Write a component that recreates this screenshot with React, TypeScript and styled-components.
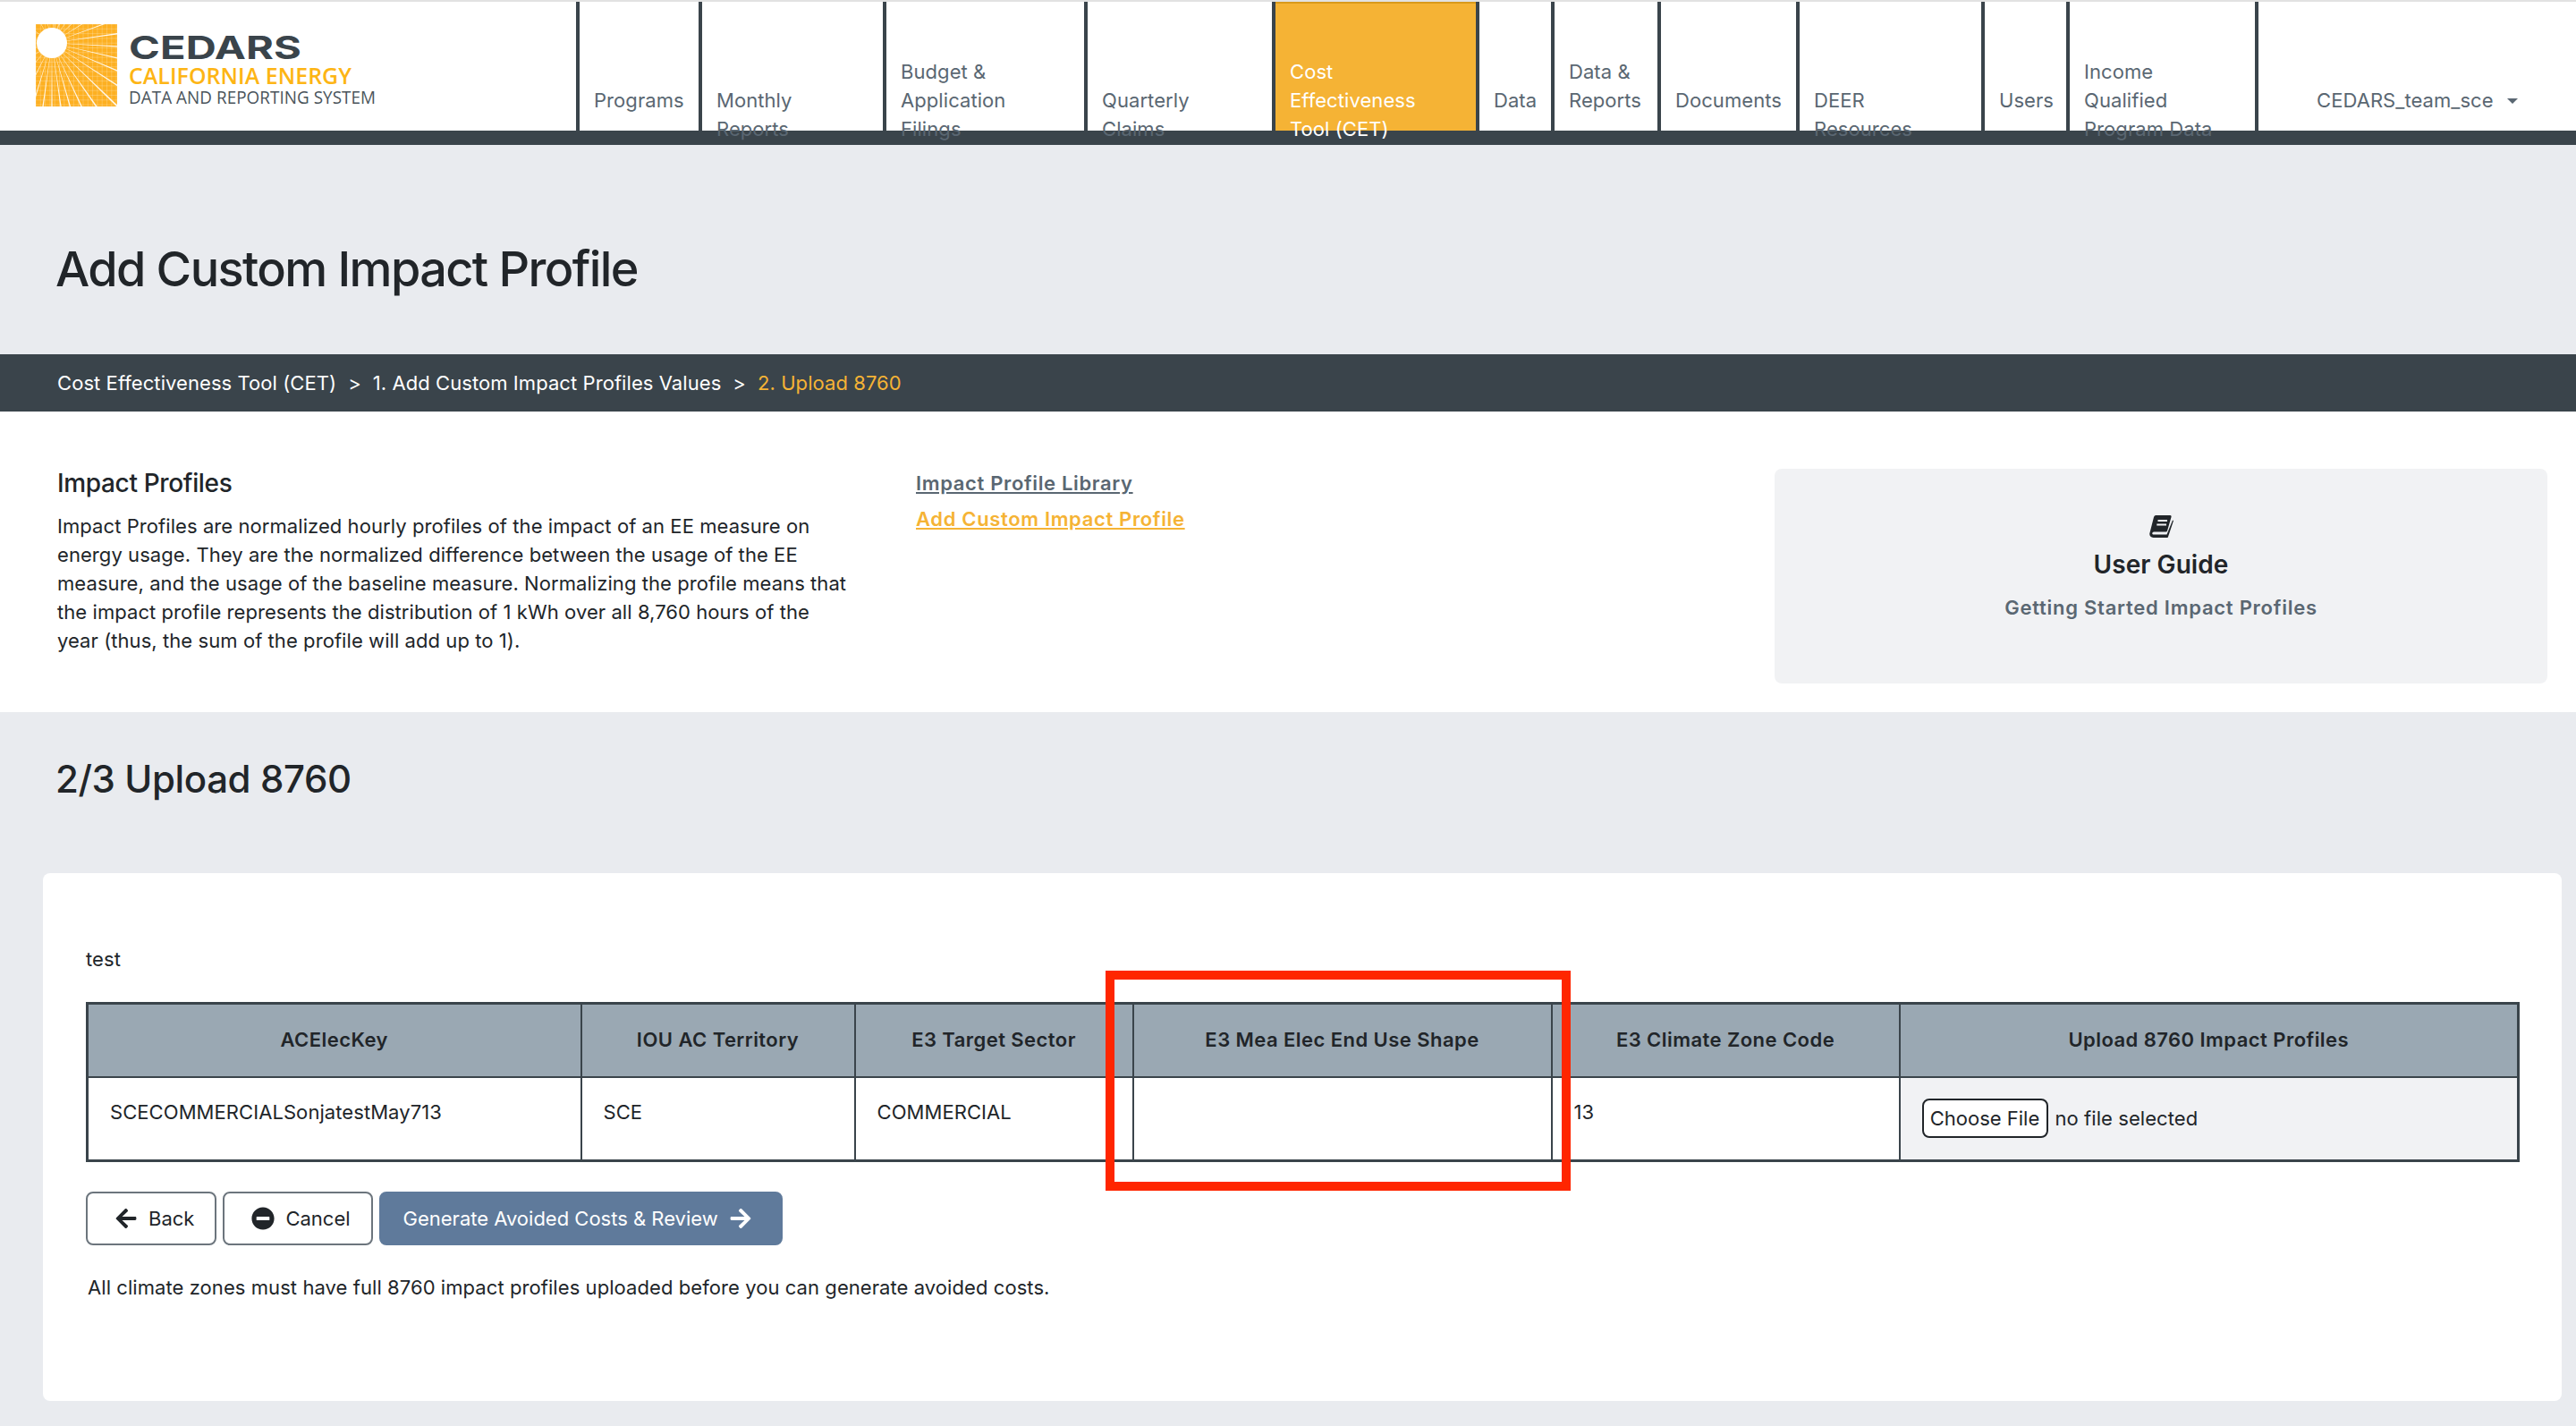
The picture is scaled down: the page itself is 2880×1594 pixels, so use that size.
import React from "react"
import styled, { createGlobalStyle } from "styled-components"
import { FaArrowLeft, FaArrowRight, FaMinusCircle } from "react-icons/fa"

const dark = "#3a444b"
const slate = "#5a6772"
const amber = "#f5b335"

const navItems = [
  { label: "Programs", width: 137, top: 94 },
  { label: "Monthly Reports", width: 206, top: 94, measure: 120 },
  { label: "Budget & Application Filings", width: 225, top: 62, measure: 140 },
  { label: "Quarterly Claims", width: 210, top: 94, measure: 120 },
  { label: "Cost Effectiveness Tool (CET)", width: 228, top: 62, active: true, measure: 170 },
  { label: "Data", width: 84, top: 94 },
  { label: "Data & Reports", width: 119, top: 62, measure: 90 },
  { label: "Documents", width: 155, top: 94 },
  { label: "DEER Resources", width: 207, top: 94, measure: 120 },
  { label: "Users", width: 95, top: 94 },
  { label: "Income Qualified Program Data", width: 211, top: 62, measure: 160 },
]

const columns = [552, 306, 311, 468, 389, 692]
const headings = [
  "ACElecKey",
  "IOU AC Territory",
  "E3 Target Sector",
  "E3 Mea Elec End Use Shape",
  "E3 Climate Zone Code",
  "Upload 8760 Impact Profiles",
]

const rayAngles = [-80, -68, -56, -44, -32, -20, -8, 3, 13, 23, 33, 44, 55, 65, 74, 82, 90, 98, 107, 117, 130, 146, 165, 190, 215, 240, 258, 274, 290]

const LogoDrawing = () => (
  <svg width="400" height="92" viewBox="0 0 400 92">
    <defs>
      <clipPath id="sunSquare">
        <rect width="91" height="92" />
      </clipPath>
    </defs>
    <rect width="91" height="92" fill="#fdb022" />
    <g clipPath="url(#sunSquare)">
      {Array.from({ length: 18 }).map((_, i) => (
        <React.Fragment key={i}>
          <line x1={i * 5.3} y1="0" x2={i * 5.3} y2="92" stroke="#fff" strokeOpacity=".3" strokeWidth=".7" />
          <line x1="0" y1={i * 5.3} x2="91" y2={i * 5.3} stroke="#fff" strokeOpacity=".3" strokeWidth=".7" />
        </React.Fragment>
      ))}
      {rayAngles.map((a) => {
        const r = (a * Math.PI) / 180
        const s = 0.009
        const cx = 18
        const cy = 21
        return (
          <polygon
            key={a}
            fill="#fff"
            fillOpacity=".9"
            points={`${cx},${cy} ${cx + 110 * Math.cos(r - s)},${cy + 110 * Math.sin(r - s)} ${cx + 110 * Math.cos(r + s)},${cy + 110 * Math.sin(r + s)}`}
          />
        )
      })}
      <circle cx="18" cy="21" r="17" fill="#fff" />
    </g>
    <text x="104" y="39" fill={dark} fontFamily="Inter" fontWeight="700" fontSize="36" textLength="193" lengthAdjust="spacingAndGlyphs">
      CEDARS
    </text>
    <text x="104" y="67" fill="#fdb515" fontFamily="Open Sans" fontWeight="600" fontSize="25" textLength="249" lengthAdjust="spacingAndGlyphs">
      CALIFORNIA ENERGY
    </text>
    <text x="104" y="89" fill="#4a545b" fontFamily="Open Sans" fontSize="20" textLength="276" lengthAdjust="spacingAndGlyphs">
      DATA AND REPORTING SYSTEM
    </text>
  </svg>
)

const BookIcon = () => (
  <svg width="27" height="25" viewBox="0 0 27 25" fill="#212529">
    <path d="M7 0H23a1.6 1.6 0 0 1 1.5 2L20 17.5a1.5 1.5 0 0 1-1.4 1H5a2 2 0 0 0-1.8 1.5c0 1 .8 1.5 1.8 1.5H19.5L26 5.5l1 .5L21 24a1 1 0 0 1-1 1H4.5C1.5 25-.3 22.5.4 20L5 2A2.6 2.6 0 0 1 7 0z" />
    <path d="M9.5 6H20M8.3 10.5H19" stroke="#f1f2f4" strokeWidth="2" />
  </svg>
)

export default function App() {
  return (
    <>
      <GlobalStyle />
      <Header>
        <LogoCell>
          <LogoDrawing />
        </LogoCell>
        {navItems.map((item) => (
          <NavItem key={item.label} $width={item.width} $top={item.top} $active={item.active}>
            <NavLabel $measure={item.measure}>{item.label}</NavLabel>
          </NavItem>
        ))}
        <UserItem>
          <span>CEDARS_team_sce</span>
          <Caret />
        </UserItem>
      </Header>

      <PageTitle>Add Custom Impact Profile</PageTitle>

      <Breadcrumb>
        <span>Cost Effectiveness Tool (CET)</span>
        <Crumb>&gt;</Crumb>
        <span>1. Add Custom Impact Profiles Values</span>
        <Crumb>&gt;</Crumb>
        <CurrentCrumb>2. Upload 8760</CurrentCrumb>
      </Breadcrumb>

      <InfoSection>
        <div>
          <InfoHeading>Impact Profiles</InfoHeading>
          <InfoText>
            Impact Profiles are normalized hourly profiles of the impact of an EE measure on energy usage. They are the
            normalized difference between the usage of the EE measure, and the usage of the baseline measure.
            Normalizing the profile means that the impact profile represents the distribution of 1 kWh over all 8,760
            hours of the year (thus, the sum of the profile will add up to 1).
          </InfoText>
        </div>
        <LinkColumn>
          <SideLink href="#">Impact Profile Library</SideLink>
          <SideLink href="#" $active>
            Add Custom Impact Profile
          </SideLink>
        </LinkColumn>
        <GuideCard>
          <BookIcon />
          <GuideTitle>User Guide</GuideTitle>
          <GuideLink>Getting Started Impact Profiles</GuideLink>
        </GuideCard>
      </InfoSection>

      <StepTitle>2/3 Upload 8760</StepTitle>

      <Card>
        <CardNote>test</CardNote>
        <TableWrap>
          <Table>
            <colgroup>
              {columns.map((w, i) => (
                <col key={i} width={w} />
              ))}
            </colgroup>
            <thead>
              <tr>
                {headings.map((h) => (
                  <Th key={h}>{h}</Th>
                ))}
              </tr>
            </thead>
            <tbody>
              <tr>
                <Td>SCECOMMERCIALSonjatestMay713</Td>
                <Td>SCE</Td>
                <Td>COMMERCIAL</Td>
                <Td />
                <Td>13</Td>
                <UploadCell>
                  <UploadRow>
                    <ChooseFile type="button">Choose File</ChooseFile>
                    <span>no file selected</span>
                  </UploadRow>
                </UploadCell>
              </tr>
            </tbody>
          </Table>
          <Highlight />
        </TableWrap>
        <Actions>
          <OutlineButton type="button">
            <FaArrowLeft size={26} />
            Back
          </OutlineButton>
          <OutlineButton type="button">
            <FaMinusCircle size={26} />
            Cancel
          </OutlineButton>
          <PrimaryButton type="button">
            Generate Avoided Costs &amp; Review
            <FaArrowRight size={26} />
          </PrimaryButton>
        </Actions>
        <Footnote>All climate zones must have full 8760 impact profiles uploaded before you can generate avoided costs.</Footnote>
      </Card>
    </>
  )
}

const GlobalStyle = createGlobalStyle`
  html, body {
    margin: 0;
    background: #e9ebef;
    color: #212529;
    font-family: "Inter", "Liberation Sans", sans-serif;
    font-size: 22px;
    line-height: 32px;
    letter-spacing: .07px;
  }
  * {
    box-sizing: border-box;
  }
`

const Header = styled.header`
  display: flex;
  height: 162px;
  background: #fff;
  border-top: 2px solid #e2e2e2;
  border-bottom: 16px solid ${dark};
`

const LogoCell = styled.div`
  width: 644px;
  padding: 25px 0 0 40px;
`

const NavItem = styled.div<{ $width: number; $top: number; $active?: boolean }>`
  width: ${(p) => p.$width}px;
  padding: ${(p) => p.$top}px 16px 0;
  border-left: 4px solid ${dark};
  color: ${(p) => (p.$active ? "#fff" : slate)};
  background: ${(p) => (p.$active ? amber : "transparent")};
  box-shadow: ${(p) => (p.$active ? "inset 0 2px 0 #d99a1c" : "none")};
`

const NavLabel = styled.div<{ $measure?: number }>`
  width: ${(p) => (p.$measure ? `${p.$measure}px` : "auto")};
  white-space: ${(p) => (p.$measure ? "normal" : "nowrap")};
`

const UserItem = styled.div`
  flex: 1;
  display: flex;
  align-items: flex-start;
  gap: 15px;
  padding: 94px 0 0 65px;
  border-left: 4px solid ${dark};
  color: ${slate};
`

const Caret = styled.i`
  width: 0;
  height: 0;
  margin-top: 14px;
  border-left: 6px solid transparent;
  border-right: 6px solid transparent;
  border-top: 6px solid ${slate};
`

const PageTitle = styled.h1`
  margin: 0;
  padding: 105px 0 61px 62px;
  font-size: 54px;
  line-height: 68px;
  font-weight: 500;
  letter-spacing: -1.6px;
`

const Breadcrumb = styled.nav`
  display: flex;
  align-items: center;
  height: 64px;
  padding-left: 64px;
  background: ${dark};
  color: #fff;
`

const Crumb = styled.span`
  margin: 0 13px;
`

const CurrentCrumb = styled.span`
  color: ${amber};
`

const InfoSection = styled.section`
  display: grid;
  grid-template-columns: 960px 960px 864px;
  height: 336px;
  padding: 60px 0 0 64px;
  background: #fff;
`

const InfoHeading = styled.h3`
  margin: 0 0 12px;
  font-size: 28px;
  line-height: 40px;
  font-weight: 500;
  letter-spacing: -.35px;
`

const InfoText = styled.p`
  width: 888px;
  margin: 0;
`

const LinkColumn = styled.div`
  display: flex;
  flex-direction: column;
  align-items: flex-start;
`

const SideLink = styled.a<{ $active?: boolean }>`
  line-height: 40px;
  font-weight: 600;
  letter-spacing: .65px;
  color: ${(p) => (p.$active ? amber : slate)};
  text-decoration: underline;
`

const GuideCard = styled.aside`
  display: flex;
  flex-direction: column;
  align-items: center;
  height: 240px;
  margin-top: 4px;
  padding-top: 52px;
  background: #f1f2f4;
  border-radius: 8px;
`

const GuideTitle = styled.div`
  margin-top: 10px;
  font-size: 28px;
  line-height: 40px;
  font-weight: 600;
`

const GuideLink = styled.div`
  margin-top: 12px;
  font-weight: 600;
  letter-spacing: .75px;
  color: ${slate};
`

const StepTitle = styled.h2`
  margin: 0;
  padding: 47px 0 77px 62px;
  font-size: 42px;
  line-height: 56px;
  font-weight: 500;
  letter-spacing: -.4px;
`

const Card = styled.main`
  height: 590px;
  margin: 0 16px 28px 48px;
  padding: 80px 48px 0;
  background: #fff;
  border-radius: 8px;
`

const CardNote = styled.div`
  margin-bottom: 32px;
`

const TableWrap = styled.div`
  position: relative;
`

const Table = styled.table`
  width: 2718px;
  table-layout: fixed;
  border-collapse: collapse;
  border: 3px solid ${dark};
`

const Th = styled.th`
  height: 82px;
  padding: 0 0 1px;
  background: #9aa8b3;
  border: 2px solid ${dark};
  font-weight: 600;
  letter-spacing: .45px;
  text-align: center;
`

const Td = styled.td`
  height: 94px;
  padding: 0 0 14px 24px;
  border: 2px solid ${dark};
`

const UploadCell = styled(Td)`
  padding-bottom: 0;
  background: #f1f2f4;
`

const UploadRow = styled.div`
  display: flex;
  align-items: center;
  gap: 8px;
`

const ChooseFile = styled.button`
  width: 141px;
  height: 44px;
  padding: 0;
  background: #fff;
  border: 2px solid #212529;
  border-radius: 8px;
  color: #212529;
  font: inherit;
`

const Highlight = styled.div`
  position: absolute;
  left: 1140px;
  top: -35px;
  width: 520px;
  height: 246px;
  border: 10px solid #ff2600;
  pointer-events: none;
`

const Actions = styled.div`
  display: flex;
  gap: 7px;
  margin-top: 33px;
`

const OutlineButton = styled.button`
  display: flex;
  align-items: center;
  gap: 12px;
  height: 60px;
  padding: 0 23px 0 30px;
  background: #fff;
  border: 2px solid #6c757d;
  border-radius: 8px;
  color: #212529;
  font: inherit;
`

const PrimaryButton = styled(OutlineButton)`
  padding: 0 32px 0 25px;
  background: #5f7a9b;
  border-color: #5f7a9b;
  color: #fff;
`

const Footnote = styled.p`
  margin: 31px 0 0 2px;
`
